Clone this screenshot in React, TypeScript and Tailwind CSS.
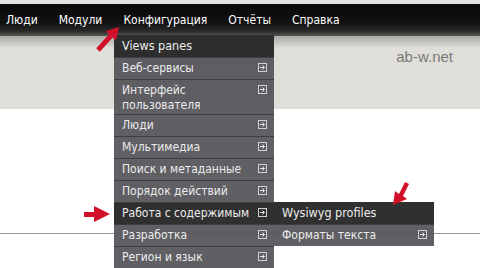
import React from "react";

const Arrow = () => (
  <svg width="9" height="9" viewBox="0 0 9 9" className="absolute right-[7px] top-[5px]">
    <rect x="0.5" y="0.5" width="8" height="8" fill="none" stroke="#d0d0d0" strokeWidth="1" />
    <path d="M2 4.5 H6.5 M4.5 2.5 L6.5 4.5 L4.5 6.5" fill="none" stroke="#e8e8e8" strokeWidth="1" />
  </svg>
);

type Item = { label: React.ReactNode; arrow?: boolean; dark?: boolean; tall?: boolean };

const items: Item[] = [
  { label: "Веб-сервисы", arrow: true },
  { label: (<>Интерфейс<br />пользователя</>), arrow: true, tall: true },
  { label: "Люди", arrow: true },
  { label: "Мультимедиа", arrow: true },
  { label: "Поиск и метаданные", arrow: true },
  { label: "Порядок действий", arrow: true },
  { label: "Работа с содержимым", arrow: true, dark: true },
  { label: "Разработка", arrow: true },
  { label: "Регион и язык", arrow: true },
];

function Row({ it }: { it: Item }) {
  return (
    <div
      className={
        "relative whitespace-nowrap border-t border-[#3e3d42] pl-[8px] pt-[3px] text-[12px] leading-[15px] text-[#ececec] " +
        (it.dark ? "bg-[rgba(40,40,40,0.96)]" : "bg-[rgba(86,85,90,0.94)]") +
        (it.tall ? " h-[35px]" : " h-[22px]")
      }
    >
      {it.label}
      {it.arrow && <Arrow />}
    </div>
  );
}

export default function App() {
  const font = { fontFamily: '"DejaVu Sans Condensed", "DejaVu Sans", Verdana, sans-serif' };
  return (
    <div className="relative w-[480px] h-[268px] overflow-hidden bg-white" style={font}>
      <div className="h-[4px] bg-[#e4e4e4]" />
      <div className="h-[32px] bg-[linear-gradient(#0a0a0a,#111_60%,#2a2a2a_85%,#555)] flex items-center pl-[6px] gap-[21px] text-[12px] text-white">
        <span>Люди</span>
        <span>Модули</span>
        <span>Конфигурация</span>
        <span>Отчёты</span>
        <span>Справка</span>
      </div>
      <div className="h-[73px] bg-[linear-gradient(#a9a8a4,#dfded8_12px,#dfded8)] flex justify-end pr-[27px] pt-[10px]">
        <span className="text-[15px] text-[#7a7a7a]" style={{ fontFamily: '"Liberation Sans", Arial, sans-serif' }}>ab-w.net</span>
      </div>
      <div className="h-[124px]" />
      <div className="h-px bg-[#9a9a9a]" />

      {/* dropdown */}
      <div className="absolute left-[114px] top-[35px] w-[160px]">
        <div className="h-[22px] whitespace-nowrap bg-[#2e2e2e] pl-[8px] pt-[3px] text-[12.5px] leading-[15px] text-[#ececec]">Views panes</div>
        {items.map((it, i) => (
          <Row key={i} it={it} />
        ))}
      </div>

      {/* submenu */}
      <div className="absolute left-[274px] top-[202px] w-[160px]">
        <div className="h-[22px] whitespace-nowrap bg-[rgba(40,40,40,0.96)] pl-[8px] pt-[3px] text-[12.5px] leading-[15px] text-[#ececec]">Wysiwyg profiles</div>
        <Row it={{ label: "Форматы текста", arrow: true }} />
      </div>

      {/* red annotation arrows */}
      <svg className="absolute left-0 top-0" width="480" height="268" viewBox="0 0 480 268">
        <polygon points="119,27 116,40.6 112.7,37.6 99.8,51.7 96.2,48.3 109.1,34.2 105.7,31.2" fill="#d2102a" />
        <polygon points="84,212 94,212 94,206 110,214 94,222 94,217 84,217" fill="#d2102a" />
        <polygon points="393,205 395,191 399,194 405,182 409,184 403,196 407,199" fill="#d2102a" />
      </svg>
    </div>
  );
}
